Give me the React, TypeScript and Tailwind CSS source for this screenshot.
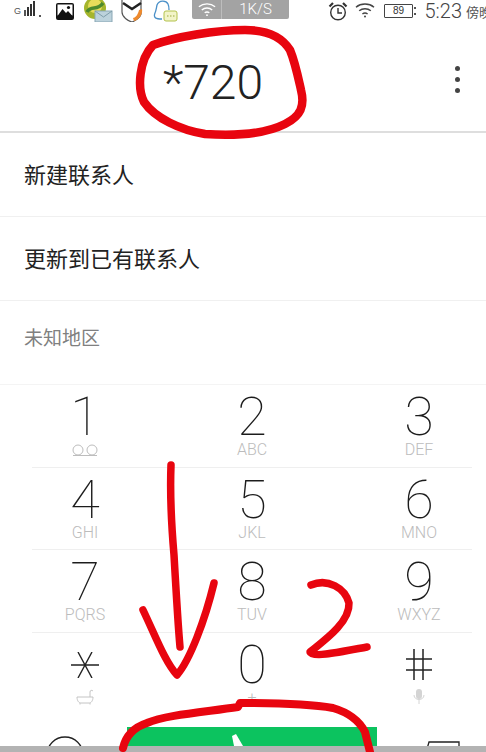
import React from "react";

const keys: { d: string; s: string }[] = [
  { d: "1", s: "vm" },
  { d: "2", s: "ABC" },
  { d: "3", s: "DEF" },
  { d: "4", s: "GHI" },
  { d: "5", s: "JKL" },
  { d: "6", s: "MNO" },
  { d: "7", s: "PQRS" },
  { d: "8", s: "TUV" },
  { d: "9", s: "WXYZ" },
];

function Voicemail() {
  return (
    <svg width="28" height="13" viewBox="0 0 28 13" fill="none" stroke="#bdbdbd" strokeWidth="1">
      <circle cx="7" cy="6" r="5" />
      <circle cx="21" cy="6" r="5" />
      <path d="M2 11.500h24" />
    </svg>
  );
}

function Wifi({ color, size }: { color: string; size: number }) {
  return (
    <svg width={size} height={size * 0.8} viewBox="0 0 20 16" fill="none" stroke={color} strokeWidth="1.5">
      <path d="M1 5.2C6 1 14 1 19 5.2" />
      <path d="M4.2 8.8C7.5 6 12.5 6 15.8 8.8" />
      <path d="M7.4 12C9 10.9 11 10.9 12.6 12" />
      <circle cx="10" cy="14.6" r="1" fill={color} stroke="none" />
    </svg>
  );
}

function KeyCell({ d, s }: { d: string; s: string }) {
  return (
    <div className="flex flex-col items-center">
      <div className="h-[48px] text-[54px] leading-[48px] font-thin text-[#1c1c1c] font-['Roboto',sans-serif]">
        {d}
      </div>
      <div className="h-[18px] flex items-center justify-center text-[16px] leading-[18px] font-light text-[#bcbcbc] font-['Roboto',sans-serif]">
        {s === "vm" ? <Voicemail /> : s}
      </div>
    </div>
  );
}

function KeyRow({ children, last }: { children: React.ReactNode; last?: boolean }) {
  return (
    <div className={last ? "h-[93px] pt-[8px]" : "h-[82.5px] pt-[8px] border-b border-[#efefef] ml-[32px] mr-[14px]"}>
      <div className={`grid grid-cols-[100px_100px_100px] gap-x-[67px] ${last ? "pl-[35px]" : "pl-[3px]"}`}>{children}</div>
    </div>
  );
}

export default function App() {
  return (
    <div className="relative w-[486px] h-[752px] overflow-hidden bg-white flex flex-col font-['Noto_Sans_CJK_SC','Noto_Sans',sans-serif]">
      {/* status bar */}
      <div className="h-[22px] flex items-start relative shrink-0 overflow-hidden [&>*]:shrink-0">
        <div className="flex items-end h-[17px] ml-[14px] gap-[1px]">
          <span className="text-[9px] leading-[11px] text-[#555] font-['Liberation_Sans',sans-serif] mr-[2px]">G</span>
          <span className="w-[2px] h-[6px] bg-[#555] mb-[1px]" />
          <span className="w-[2px] h-[9px] bg-[#333] mb-[1px]" />
          <span className="w-[2px] h-[12px] bg-[#333] mb-[1px]" />
          <span className="w-[2px] h-[15px] bg-[#333] mb-[1px]" />
          <span className="w-[2px] h-[2px] bg-[#555] ml-[3px]" />
        </div>
        <svg className="ml-[15px] mt-[3px]" width="18" height="17" viewBox="0 0 18 17">
          <rect x="0" y="0" width="18" height="17" rx="2" fill="#111" />
          <rect x="1.5" y="1.5" width="15" height="11" fill="#fff" />
          <circle cx="12.5" cy="4.5" r="1.6" fill="#111" />
          <path d="M1.5 13l5-7 3.5 4 2-2 4.5 5z" fill="#111" />
        </svg>
        <svg className="ml-[9px]" width="30" height="23" viewBox="0 0 30 23">
          <circle cx="12" cy="8" r="11" fill="#a5b52c" />
          <circle cx="12" cy="6" r="7" fill="#e6dc5a" />
          <path d="M4 12C8 4 14 12 20 3" fill="none" stroke="#4c8a2e" strokeWidth="3.500" />
          <rect x="12" y="11" width="17" height="11" fill="#bcd2dc" stroke="#8aa7b5" />
          <path d="M12 11l8.500 6 8.500-6" fill="none" stroke="#7f9daa" />
        </svg>
        <svg className="ml-[7px]" width="26" height="24" viewBox="0 0 26 24">
          <path d="M2 0v12c0 5 6 9 10 10 3-1 8-4 9-8V0" fill="#fff" stroke="#555" strokeWidth="1.200" />
          <path d="M3 3l9 6 9-6" fill="none" stroke="#222" strokeWidth="2.500" />
          <path d="M22 9c1 5-3 11-8 12l-1-3c2 0 5-3 6-8z" fill="#ee8a2d" />
        </svg>
        <svg className="ml-[7px]" width="25" height="24" viewBox="0 0 25 24">
          <path d="M9 19C3 19 0 18 2 13c1-2 1-3 2-8C6 0 13 0 15 4c1 2 1 4 1 6" fill="#fff" stroke="#4a90c8" strokeWidth="1.300" />
          <rect x="11" y="11" width="13" height="10" rx="2" fill="#f2f4c8" stroke="#b3c24d" />
          <path d="M14 16h1.500M17 16h1.500M20 16h1.500" stroke="#9aa83a" />
        </svg>
        <div className="ml-[14px] w-[97px] h-[19px] rounded-b-[2px] bg-[#a3a3a3] flex items-center">
          <div className="w-[30px] h-full flex items-center justify-center border-r border-[#bdbdbd]">
            <Wifi color="#ffffff" size={18} />
          </div>
          <div className="flex-1 text-center text-white text-[15px] leading-none font-['Roboto',sans-serif] font-light">1K/S</div>
        </div>
        <svg className="ml-[39px] mt-[1px]" width="20" height="20" viewBox="0 0 20 20" fill="none" stroke="#333" strokeWidth="1.400">
          <circle cx="10" cy="11.500" r="7.300" />
          <path d="M10 7v5h4" />
          <path d="M1.500 5.500L5 2M18.500 5.500L15 2" strokeWidth="2.200" />
        </svg>
        <div className="ml-[7px] mt-[2px]">
          <Wifi color="#444444" size={20} />
        </div>
        <div className="ml-[9px] mt-[4px] w-[29px] h-[14px] border border-[#444] rounded-[1px] flex items-center justify-center text-[10px] leading-none text-[#333] font-['Liberation_Sans',sans-serif]">
          89
        </div>
        <div className="ml-[1px] mt-[7px] w-[1.500px] h-[8px] border-y-2 border-[#555]" />
        <div className="ml-[9px] text-[20px] leading-[22px] text-[#444] font-['Roboto',sans-serif] font-light whitespace-nowrap">5:23</div>
        <div className="ml-[4px] mt-[3px] text-[13px] leading-[18px] text-[#555] whitespace-nowrap">傍晚</div>
      </div>

      {/* number header */}
      <div className="h-[111px] shrink-0 border-b-2 border-[#dedede] flex items-center relative">
        <div className="w-full text-center pr-[60px] pt-[12px] text-[48px] leading-none font-light text-[#222] font-['Roboto',sans-serif]">*720</div>
        <div className="absolute right-[26px] top-[44px] flex flex-col gap-[6px]">
          <span className="w-[5px] h-[5px] rounded-full bg-[#444]" />
          <span className="w-[5px] h-[5px] rounded-full bg-[#444]" />
          <span className="w-[5px] h-[5px] rounded-full bg-[#444]" />
        </div>
      </div>

      {/* options */}
      <div className="h-[84px] shrink-0 flex items-center pl-[24px] pb-[2px] text-[22px] text-[#222] border-b border-[#f0f0f0]">新建联系人</div>
      <div className="h-[84px] shrink-0 flex items-center pl-[24px] pb-[2px] text-[22px] text-[#222] border-b border-[#f0f0f0]">更新到已有联系人</div>
      <div className="h-[84px] shrink-0 flex items-center pl-[24px] pb-[10px] text-[19px] text-[#808080] border-b border-[#f4f4f4]">未知地区</div>

      {/* keypad */}
      <KeyRow>
        {keys.slice(0, 3).map((k) => (
          <KeyCell key={k.d} {...k} />
        ))}
      </KeyRow>
      <KeyRow>
        {keys.slice(3, 6).map((k) => (
          <KeyCell key={k.d} {...k} />
        ))}
      </KeyRow>
      <KeyRow>
        {keys.slice(6, 9).map((k) => (
          <KeyCell key={k.d} {...k} />
        ))}
      </KeyRow>
      <KeyRow last>
        <div className="flex flex-col items-center">
          <div className="h-[48px] flex items-center justify-center">
            <svg width="28" height="26" viewBox="0 0 28 26" stroke="#222" strokeWidth="1.400" fill="none">
              <path d="M0 13h28M7 0l14 26M21 0L7 26" />
            </svg>
          </div>
          <svg width="18" height="16" viewBox="0 0 18 16" fill="none" stroke="#c4c4c4" strokeWidth="1">
            <path d="M1 8h16c0 4-2 6-4 6H5c-2 0-4-2-4-6zM14 8V3c0-2 2-2 3-1M4 14v1.500M14 14v1.500" />
          </svg>
        </div>
        <div className="flex flex-col items-center">
          <div className="h-[48px] text-[54px] leading-[48px] font-thin text-[#1c1c1c] font-['Roboto',sans-serif]">0</div>
          <div className="h-[18px] text-[16px] leading-[18px] font-light text-[#bcbcbc] font-['Roboto',sans-serif]">+</div>
        </div>
        <div className="flex flex-col items-center">
          <div className="h-[48px] flex items-center justify-center">
            <svg width="26" height="31" viewBox="0 0 26 31" stroke="#222" strokeWidth="1.500" fill="none">
              <path d="M0 10h26M0 21h26M8 0v31M17 0v31" />
            </svg>
          </div>
          <svg width="12" height="15" viewBox="0 0 12 15">
            <rect x="3" y="0" width="6" height="10" rx="3" fill="#d4d4d4" />
            <path d="M1 6c0 6 10 6 10 0M6 11v4" stroke="#d4d4d4" fill="none" />
          </svg>
        </div>
      </KeyRow>

      {/* call bar */}
      <div className="absolute left-0 right-0 top-[727px] h-[25px] flex items-start">
        <svg className="absolute left-[46px] top-[9px]" width="38" height="12" viewBox="0 0 38 12" fill="none" stroke="#222" strokeWidth="1.300">
          <circle cx="19" cy="19" r="18" />
        </svg>
        <div className="ml-[127px] w-[250px] h-[19px] bg-[#0cc35f] relative">
          <svg className="absolute left-[103px] top-[7px]" width="16" height="12" viewBox="0 0 16 12">
            <path d="M2 2l4-2 7 12H4z" fill="#fff" />
          </svg>
        </div>
        <svg className="absolute left-[426px] top-[14px]" width="34" height="8" viewBox="0 0 34 8" fill="none" stroke="#222" strokeWidth="1.300">
          <path d="M1 8l2-7h30v7" />
        </svg>
      </div>
      <div className="absolute left-0 right-0 bottom-0 h-[6px] bg-[#b3b3b3]" />

      {/* hand-drawn annotations */}
      <svg className="absolute inset-0 pointer-events-none" width="486" height="752" viewBox="0 0 486 752" fill="none" stroke="#e8050f" strokeWidth="7.500" strokeLinecap="round" strokeLinejoin="round">
        <path d="M153 45C175 37 215 30 245 30C268 30 282 37 290 50C295 62 297 72 301 90C305 106 301 116 285 124C265 134 235 136 205 134C180 130 155 118 144 102C137 88 139 60 153 45Z" strokeWidth="8.500" />
        <path d="M171 465C170 490 171 520 174 555C176 590 178 625 180 647" />
        <path d="M143 610C155 635 165 662 177 675C190 660 205 620 214 583" />
        <path d="M311 585C328 578 345 588 349 603C350 622 325 640 310 652C312 658 340 652 367 647" />
        <path d="M123 748C126 735 135 727 147 723C165 715 205 712 238 707L240 703C270 703 310 704 333 708C350 713 360 722 365 732L370 752" strokeWidth="8" />
      </svg>
    </div>
  );
}
